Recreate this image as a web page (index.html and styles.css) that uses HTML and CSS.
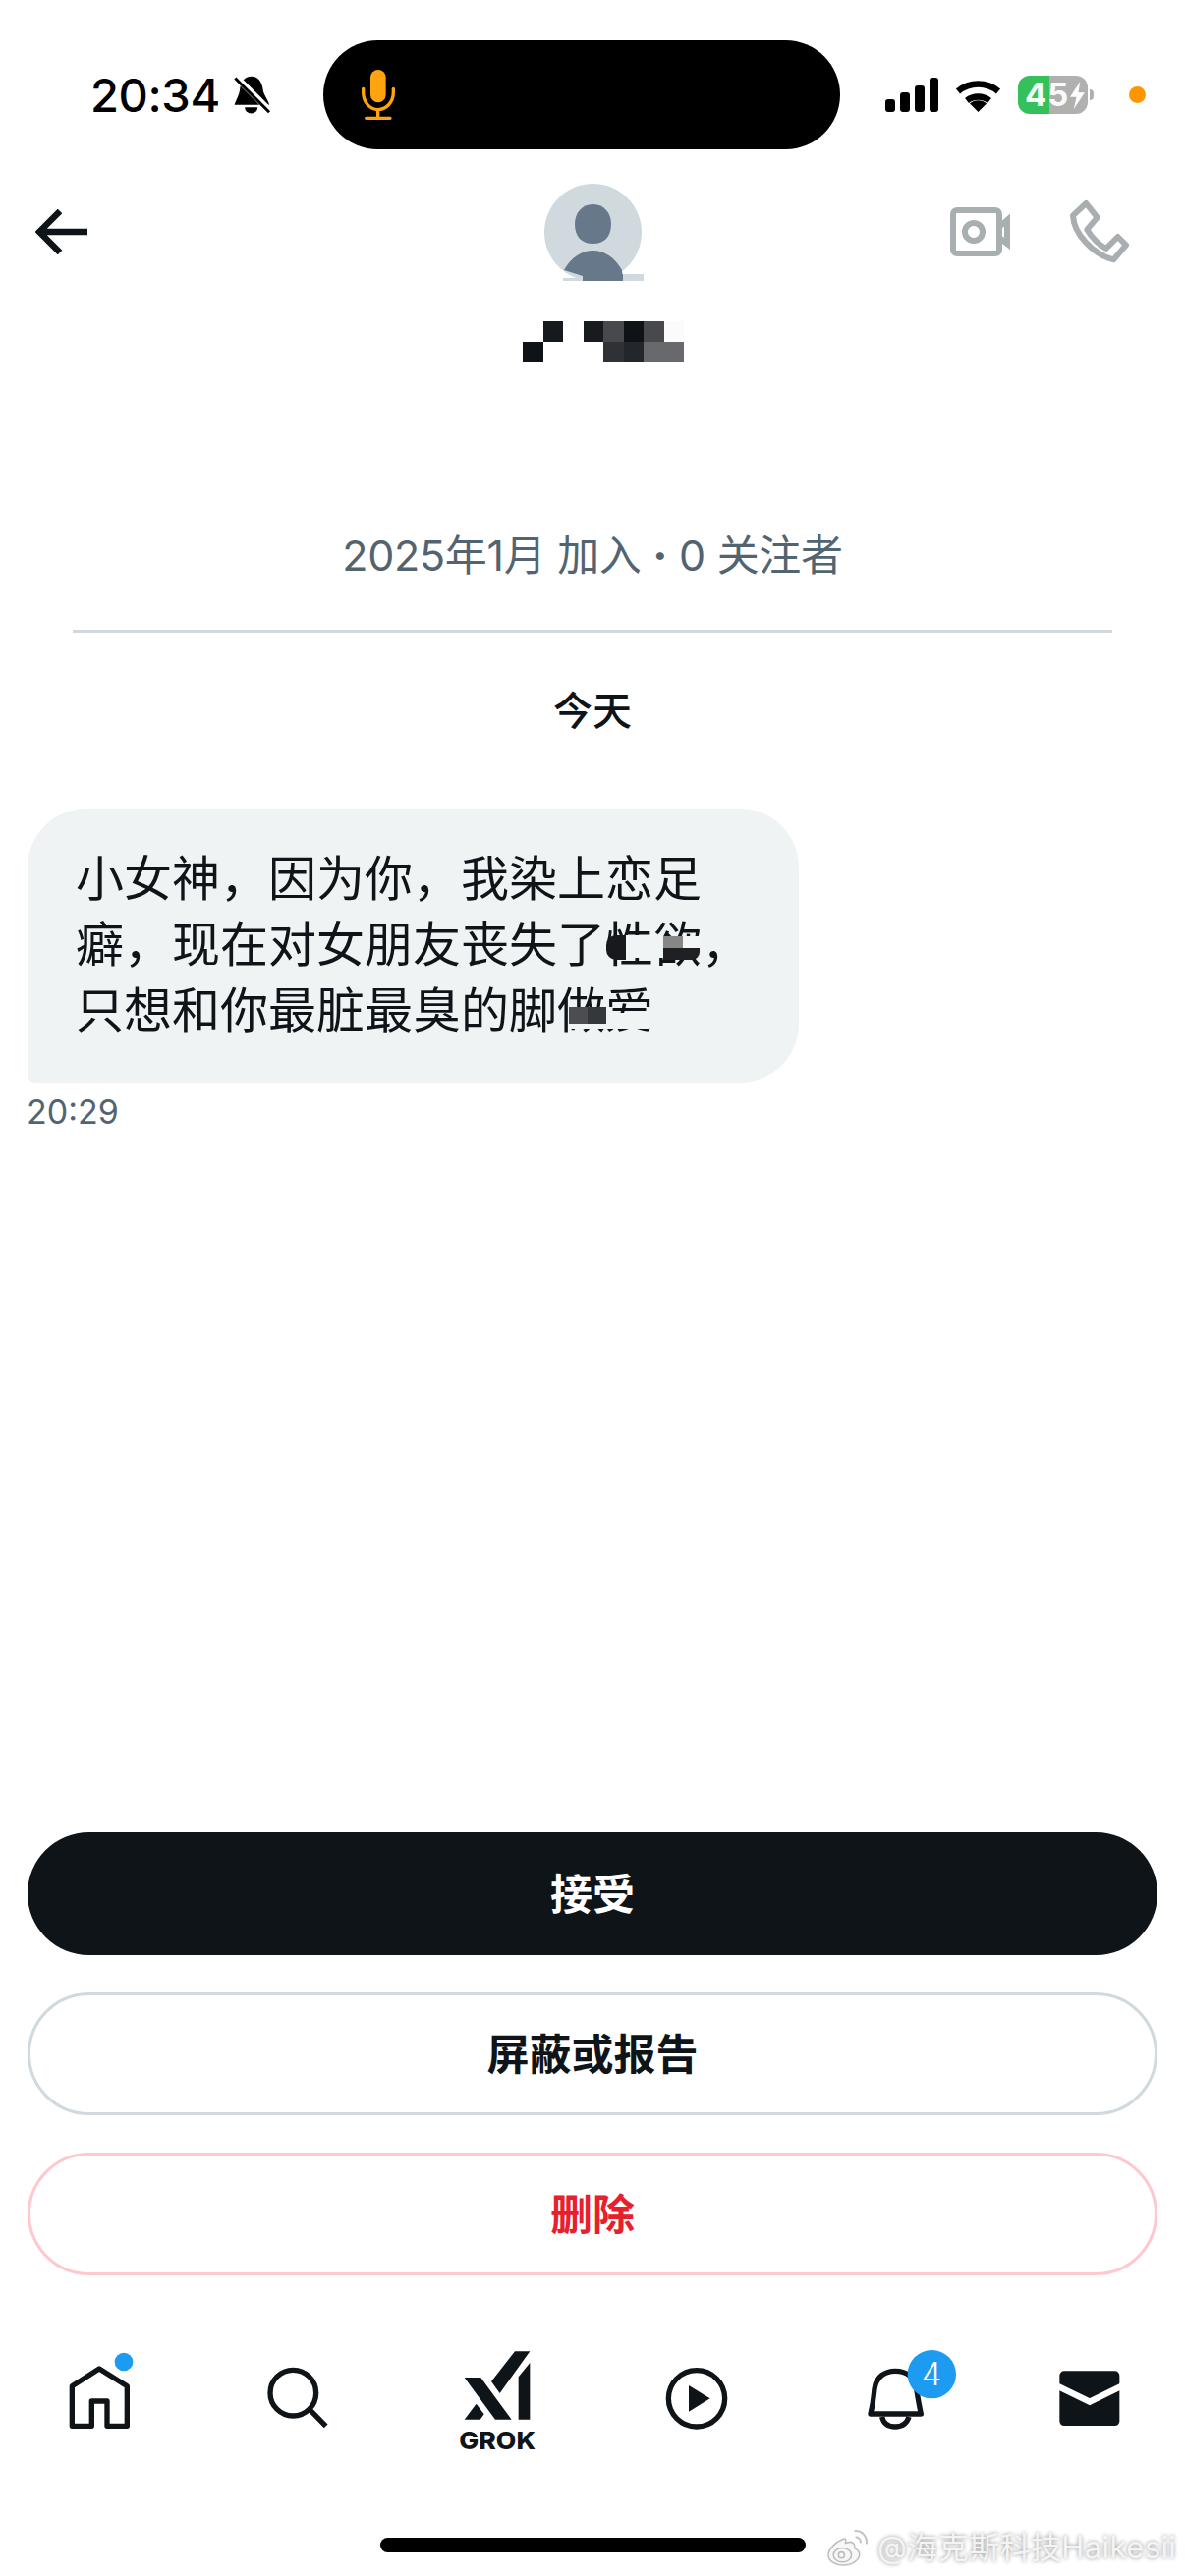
FILE: index.html
```html
<!DOCTYPE html>
<html lang="zh-CN">
<head>
<meta charset="utf-8">
<title>消息请求</title>
<link rel="stylesheet" href="styles.css">
</head>
<body>
<div class="page">
  <div class="status">
    <div class="status-left">
      <span class="clock">20:34</span>
      <svg class="silent" viewBox="655 52 122 124"><path d="M712 57C735 57 745 75 748 95C750 115 765 130 768 145H660C665 130 675 115 677 95C680 72 692 57 712 57Z"/><path d="M692 153A20 19 0 0 0 732 153Z"/><path class="silent-gap" d="M652 46L782 176"/><path class="silent-line" d="M662 62L768 168"/></svg>
    </div>
    <div class="island">
      <svg class="mic" viewBox="1045 30 108 153"><rect x="1075" y="30" width="47" height="100" rx="23.5"/><path class="mic-line" d="M1053 88V100C1053 130 1075 152 1098 152C1122 152 1145 130 1145 100V88M1098 152V178M1062 178H1135"/></svg>
    </div>
    <div class="status-right">
      <svg class="signal" viewBox="0 0 54 35"><rect x="0" y="22" width="10" height="13" rx="3"/><rect x="15" y="15" width="10" height="20" rx="3"/><rect x="30" y="8" width="10" height="27" rx="3"/><rect x="45" y="0" width="9" height="35" rx="3"/></svg>
      <svg class="wifi" viewBox="0 0 47 35"><path class="wifi-arc" d="M3 14A32 32 0 0 1 44 14"/><path class="wifi-arc" d="M12 23.500A19 19 0 0 1 35 23.500"/><path d="M23.500 35L15 26.500A13 13 0 0 1 32 26.500Z"/></svg>
      <div class="battery"><span class="battery-num">45</span><svg class="bolt" viewBox="0 0 16 30"><path d="M11 0L0 17H7L4 30L16 12H9Z"/></svg></div>
      <span class="rec-dot"></span>
    </div>
  </div>

  <div class="header">
    <div class="back-cell">
      <svg class="back" viewBox="0 0 53 46"><path d="M53 23H5M25 2L4 23L25 44"/></svg>
    </div>
    <div class="identity">
      <svg class="avatar" viewBox="0 0 101 100"><circle cx="49.500" cy="49.500" r="49.500" fill="#cfd9de"/><path fill="#66788a" d="M49.500 21C61 21 68 30 68 41C68 54 61 61 49.500 61C38 61 31 54 31 41C31 30 38 21 49.500 21Z"/><path fill="#66788a" d="M20 88C27 75 38 68 49.500 68C61 68 72 75 79 88L80 99H39L39 94Z"/><rect fill="#cfd9de" x="19" y="96" width="20" height="3"/><rect fill="#66788a" x="39" y="92" width="41" height="7"/><rect fill="#cfd9de" x="80" y="92" width="21" height="7"/></svg>
      <div class="mosaic">
        <i></i><i class="k1"></i><i></i><i class="k2"></i><i class="k3"></i><i class="k4"></i><i class="k5"></i><i class="k6"></i>
        <i class="k4"></i><i></i><i></i><i></i><i class="k7"></i><i class="k8"></i><i class="k9"></i><i class="k9"></i>
      </div>
    </div>
    <div class="call-actions">
      <svg class="video" viewBox="0 0 61 50"><rect x="3" y="3" width="47" height="44" rx="4"/><circle cx="24" cy="25" r="9"/><path d="M50 20L58 13V37L50 31"/></svg>
      <svg class="phone" viewBox="680 480 200 210"><path d="M738 498L772 541L741 578C757 605 775 622 799 636L835 600L860 625L822 670C760 655 700 590 698 535Z"/></svg>
    </div>
  </div>

  <p class="meta">2025年1月 加入 <span class="meta-dot">·</span> 0 关注者</p>
  <div class="divider"></div>
  <p class="day">今天</p>

  <div class="bubble">
    <p class="bubble-text">小女神，因为你，我染上恋足<br>癖，现在对女朋友丧失了性欲，<br>只想和你最脏最臭的脚做爱</p>
    <span class="mask m1"></span><span class="mask m2"></span><span class="mask m3"></span><span class="mask m4"></span><span class="mask m5"></span><span class="mask m6"></span><span class="mask m7"></span><span class="mask m8"></span><span class="mask m9"></span>
  </div>
  <p class="sent">20:29</p>

  <div class="actions">
    <button class="btn btn-accept">接受</button>
    <button class="btn btn-block">屏蔽或报告</button>
    <button class="btn btn-delete">删除</button>
  </div>

  <nav class="tabs">
    <svg class="tab" viewBox="-57 0 360 390"><path class="line" d="M123 93L40 146V268H100V192H147V268H208V146Z"/><circle class="blue" cx="198" cy="72" r="28"/></svg>
    <svg class="tab" viewBox="552 0 360 390"><circle class="line" cx="715" cy="167" r="70"/><path class="line butt" d="M768 220L815 268"/></svg>
    <svg class="tab" viewBox="-6 0 360 390"><path class="solid" d="M222 40H268L176 168L150 132ZM268 75V248H233V118ZM68 120H118L212 248H162ZM68 248L104 200L128 232L116 248Z"/><text class="grok" x="52" y="338" textLength="233" lengthAdjust="spacingAndGlyphs">GROK</text></svg>
    <svg class="tab" viewBox="597 0 360 390"><circle class="line" cx="777" cy="184" r="86"/><path class="solid" d="M753 144L818 184L753 224Z"/></svg>
    <svg class="tab" viewBox="-21 0 360 390"><path class="line" d="M78 231C88 190 88 170 90 155C95 115 125 100 153 100C185 100 212 115 218 155C222 180 226 205 232 231Z"/><path class="line" d="M113 240C118 262 135 270 153 270C172 270 188 262 195 240"/><circle class="blue" cx="265" cy="110" r="74"/><text class="count" x="264" y="145" text-anchor="middle">4</text></svg>
    <svg class="tab" viewBox="573 0 360 390"><rect class="solid" x="655" y="100" width="183" height="167" rx="14"/><path class="env" d="M648 146L747 194L845 146"/></svg>
  </nav>

  <div class="home-bar"></div>

  <div class="watermark">
    <svg class="weibo" viewBox="0 0 44 40"><path class="wb-body" d="M17 12C9 15 2 22 2 28C2 34 9 38 17 38C26 38 33 33 33 27C33 23 29 22 28 21C29 18 27 15 24 15C22 15 20 16 19 16C20 13 19 11 17 12Z"/><ellipse class="wb-body" cx="16" cy="28" rx="9" ry="7"/><circle class="wb-body" cx="15" cy="28" r="3"/><path class="wb-wave" d="M28 4C35 3 41 9 40 17M29 10C32 10 35 13 34 16"/></svg>
    <span>@海克斯科技Haikesii</span>
  </div>
</div>
</body>
</html>
```
FILE: styles.css
```css
* { box-sizing: border-box; }
html, body { margin: 0; padding: 0; background: #fff; }
body { font-family: Inter, "Noto Sans CJK SC", sans-serif; color: #0f1419; }
p { margin: 0; }

.page {
  position: relative;
  width: 1206px;
  height: 2622px;
  overflow: hidden;
  display: flex;
  flex-direction: column;
}

/* status bar */
.status { display: flex; align-items: center; padding-top: 41px; }
.status-left { width: 329px; padding-left: 92px; display: flex; align-items: center; gap: 13px; }
.clock { font-size: 47px; font-weight: 550; line-height: 56px; color: #000; letter-spacing: -0.4px; }
.silent { width: 40px; height: 41px; fill: #000; }
.silent-gap { stroke: #fff; stroke-width: 20; fill: none; }
.silent-line { stroke: #000; stroke-width: 9; fill: none; }
.island { width: 526px; height: 111px; border-radius: 56px; background: #000; display: flex; align-items: center; padding-left: 38px; }
.mic { width: 36px; height: 51px; fill: #ffa30f; }
.mic-line { fill: none; stroke: #ffa30f; stroke-width: 10; stroke-linecap: round; }
.status-right { display: flex; align-items: center; padding-left: 46px; gap: 17px; }
.signal { width: 54px; height: 35px; fill: #000; }
.wifi { width: 47px; height: 35px; fill: #000; }
.wifi-arc { fill: none; stroke: #000; stroke-width: 6.500; }
.battery {
  position: relative;
  width: 71px;
  height: 39px;
  border-radius: 12px;
  background: linear-gradient(90deg, #34c15c 45%, #b0b0b0 45%);
  display: flex;
  align-items: center;
  padding-left: 7px;
  gap: 1px;
}
.battery::after {
  content: "";
  position: absolute;
  left: 73px;
  top: 14px;
  width: 4px;
  height: 11px;
  border-radius: 0 4px 4px 0;
  background: #b0b0b0;
}
.battery-num { font-size: 33px; line-height: 39px; font-weight: 700; color: #fff; letter-spacing: 1px; opacity: 0.94; }
.bolt { width: 15px; height: 28px; fill: #fff; }
.rec-dot { width: 17px; height: 17px; border-radius: 50%; background: #ff9500; margin-left: 25px; }

/* header */
.header { display: flex; align-items: flex-start; margin-top: 35px; }
.back-cell { height: 98px; display: flex; align-items: center; padding-left: 36px; }
.back { width: 53px; height: 46px; fill: none; stroke: #0f1419; stroke-width: 6.500; }
.identity { margin-left: 443px; display: flex; flex-direction: column; }
.avatar { width: 101px; height: 100px; margin-left: 22px; }
.mosaic { display: grid; grid-template-columns: repeat(8, 20.500px); grid-auto-rows: 20.500px; margin-top: 40px; }
.k1 { background: #16191e; }
.k2 { background: #171a1f; }
.k3 { background: #48494d; }
.k4 { background: #0f1216; }
.k5 { background: #47494d; }
.k6 { background: #fbfbfb; }
.k7 { background: #2e3135; }
.k8 { background: #23272d; }
.k9 { background: #68696c; }
.call-actions { height: 98px; margin-left: 271px; display: flex; align-items: center; gap: 61px; }
.video { width: 61px; height: 50px; fill: none; stroke: #a9aeb1; stroke-width: 6; }
.phone { width: 66.700px; height: 70px; margin-left: -3px; fill: none; stroke: #a9aeb1; stroke-width: 18; stroke-linejoin: round; }

/* conversation */
.meta { margin-top: 167px; text-align: center; font-size: 43px; line-height: 60px; color: #536471; letter-spacing: -0.3px; }
.meta-dot { font-weight: 800; }
.divider { height: 3px; margin: 46px 74px 0; background: #d2d8db; }
.day { margin-top: 55px; text-align: center; font-size: 40px; line-height: 50px; font-weight: 500; }
.bubble {
  position: relative;
  width: 785px;
  height: 279px;
  margin: 74px 0 0 28px;
  padding: 38px 0 0 49px;
  background: #eff3f4;
  border-radius: 60px 60px 60px 8px;
}
.bubble-text { font-size: 49px; line-height: 67px; white-space: nowrap; color: #0f1419; }
.sent { margin: 8px 0 0 27px; font-size: 34px; line-height: 44px; color: #536471; }

.mask { position: absolute; }
.m1 { left: 589px; top: 129px; width: 20px; height: 25px; background: #17191c; border-radius: 10px 0 0 10px; }
.m2 { left: 609px; top: 129px; width: 38px; height: 23px; background: #f1f4f5; }
.m3 { left: 647px; top: 130px; width: 20px; height: 12px; background: #868686; }
.m4 { left: 667px; top: 130px; width: 17px; height: 12px; background: #f3f5f6; }
.m5 { left: 647px; top: 142px; width: 37px; height: 12px; background: #1e2023; border-radius: 0 0 8px 0; }
.m6 { left: 551px; top: 202px; width: 19px; height: 17px; background: #4c4d50; }
.m7 { left: 570px; top: 202px; width: 19px; height: 17px; background: #35383b; }
.m8 { left: 589px; top: 208px; width: 43px; height: 16px; background: #f1f4f5; }
.m9 { left: 551px; top: 219px; width: 38px; height: 5px; background: #f1f4f5; }

/* buttons */
.actions { margin-top: auto; padding: 0 28px; display: flex; flex-direction: column; gap: 38px; }
.btn {
  height: 125px;
  border-radius: 63px;
  font-family: Inter, "Noto Sans CJK SC", sans-serif;
  font-size: 43px;
  font-weight: 700;
  background: #fff;
  padding: 0 0 6px;
}
.btn-accept { background: #0f1419; border: 0; color: #fff; }
.btn-block { border: 3px solid #cfd9de; color: #0f1419; }
.btn-delete { border: 3px solid #fdc9ce; color: #e7202d; }

/* tab bar */
.tabs { margin-top: 64px; display: grid; grid-template-columns: 202px 204px 204px 198px 210px 186px; justify-items: center; }
.tab { width: 120px; height: 130px; }
.line { fill: none; stroke: #0f1419; stroke-width: 16; stroke-linejoin: round; }
.butt { stroke-linecap: butt; }
.solid { fill: #0f1419; }
.blue { fill: #1d9bf0; }
.grok { font-size: 73px; font-weight: 800; fill: #0f1419; }
.count { font-size: 98px; font-weight: 300; fill: #fff; }
.env { fill: none; stroke: #fff; stroke-width: 19; }
.home-bar { width: 433px; height: 15px; margin: 73px 0 24px 387px; border-radius: 8px; background: #000; }

/* watermark */
.watermark {
  position: absolute;
  left: 841px;
  top: 2572px;
  display: flex;
  align-items: center;
  gap: 7px;
  font-size: 31px;
  line-height: 40px;
  letter-spacing: 0.4px;
  white-space: nowrap;
  color: #f4f4f4;
  text-shadow: 0 0 4px #8f8f8f;
}
.weibo { width: 45px; height: 41px; }
.wb-body { fill: #f7f7f7; stroke: #bdbdbd; stroke-width: 1.500; }
.wb-wave { fill: none; stroke: #c4c4c4; stroke-width: 2; }
```
